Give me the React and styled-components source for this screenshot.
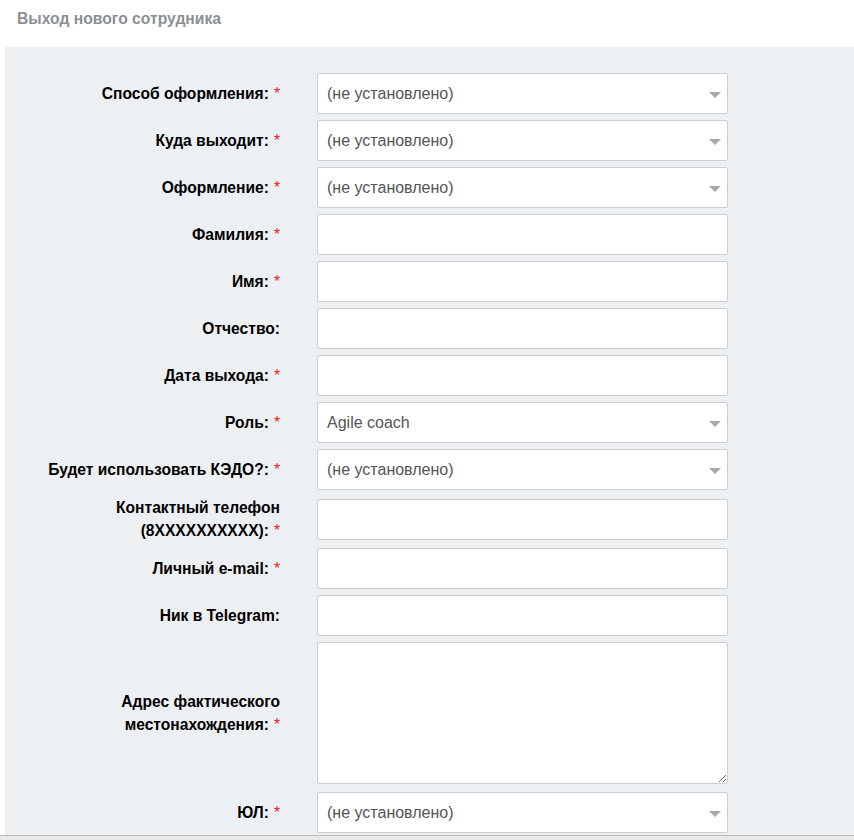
import React from 'react';
import styled, { createGlobalStyle } from 'styled-components';

const GlobalStyle = createGlobalStyle`
  html, body {
    margin: 0;
    padding: 0;
    background: #ffffff;
    font-family: 'Liberation Sans', Arial, sans-serif;
  }
`;

const Page = styled.div`
  width: 854px;
  height: 840px;
  overflow: hidden;
  display: flex;
  flex-direction: column;
`;

const Header = styled.div`
  height: 47px;
  box-sizing: border-box;
  padding: 9px 0 0 17px;
  font-size: 15.7px;
  line-height: 20px;
  font-weight: bold;
  color: #8b9095;
`;

const Panel = styled.div`
  margin-left: 5px;
  background: #edf0f3;
  padding: 26px 0 2px 0;
  display: flex;
  flex-direction: column;
  gap: 6px;
`;

const Row = styled.div`
  display: grid;
  grid-template-columns: 275px 411px;
  column-gap: 37px;
  align-items: center;
  margin-bottom: ${(p) => p.extra || 0}px;
`;

const Label = styled.label`
  text-align: right;
  font-size: 15.6px;
  line-height: 23px;
  font-weight: bold;
  color: #000;
`;

const Star = styled.span`
  color: #f01818;
  font-weight: normal;
  margin-left: 5px;
`;

const fieldBase = `
  box-sizing: border-box;
  width: 411px;
  border: 1px solid #cbcfd4;
  border-radius: 2px;
  background: #ffffff;
  font-family: 'Liberation Sans', Arial, sans-serif;
  font-size: 16px;
  color: #555;
  outline: none;
`;

const TextInput = styled.input`
  ${fieldBase}
  height: 41px;
  padding: 0 9px;
  display: block;
`;

const TextArea = styled.textarea`
  ${fieldBase}
  height: 142px;
  padding: 8px 9px;
  display: block;
  resize: vertical;
`;

const Select = styled.div`
  ${fieldBase}
  height: 41px;
  padding: 0 6px 0 9px;
  display: flex;
  align-items: center;
  justify-content: space-between;
`;

const Arrow = styled.span`
  width: 0;
  height: 0;
  border-left: 6px solid transparent;
  border-right: 6px solid transparent;
  border-top: 6px solid #a9a9a9;
  margin-top: 2px;
`;

const Footer = styled.div`
  flex: 1;
  border-top: 1px solid #bcbcbc;
  background: #e7e9e9;
`;

const fields = [
  { label: 'Способ оформления:', req: true, type: 'select', value: '(не установлено)' },
  { label: 'Куда выходит:', req: true, type: 'select', value: '(не установлено)' },
  { label: 'Оформление:', req: true, type: 'select', value: '(не установлено)' },
  { label: 'Фамилия:', req: true, type: 'text' },
  { label: 'Имя:', req: true, type: 'text' },
  { label: 'Отчество:', req: false, type: 'text' },
  { label: 'Дата выхода:', req: true, type: 'text' },
  { label: 'Роль:', req: true, type: 'select', value: 'Agile coach' },
  { label: 'Будет использовать КЭДО?:', req: true, type: 'select', value: '(не установлено)' },
  { label: <>Контактный телефон<br />(8XXXXXXXXXX):</>, req: true, type: 'text' },
  { label: 'Личный e-mail:', req: true, type: 'text' },
  { label: 'Ник в Telegram:', req: false, type: 'text' },
  { label: <>Адрес фактического<br />местонахождения:</>, req: true, type: 'area', extra: 2 },
  { label: 'ЮЛ:', req: true, type: 'select', value: '(не установлено)' },
];

const Field = ({ f }) => {
  if (f.type === 'select') {
    return (
      <Select>
        <span>{f.value}</span>
        <Arrow />
      </Select>
    );
  }
  if (f.type === 'area') return <TextArea />;
  return <TextInput type="text" />;
};

export default function App() {
  return (
    <Page>
      <GlobalStyle />
      <Header>Выход нового сотрудника</Header>
      <Panel>
        {fields.map((f, i) => (
          <Row key={i} extra={f.extra}>
            <Label>
              {f.label}
              {f.req && <Star>*</Star>}
            </Label>
            <Field f={f} />
          </Row>
        ))}
      </Panel>
      <Footer />
    </Page>
  );
}
